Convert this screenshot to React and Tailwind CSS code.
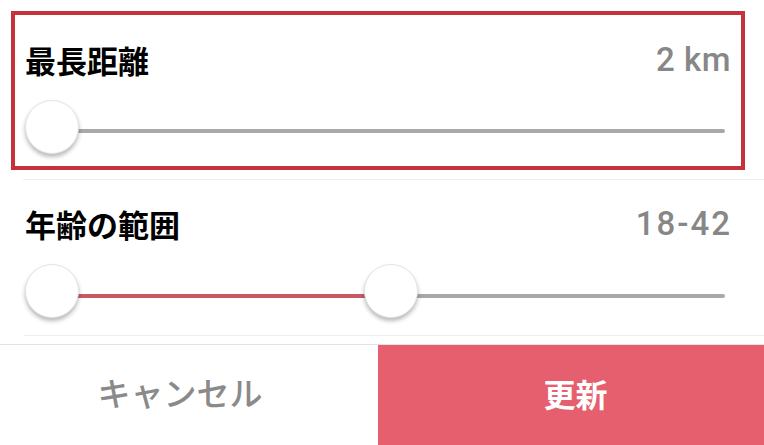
import React from "react";

const cjk = { fontFamily: '"Noto Sans CJK JP", "Noto Sans", sans-serif' };
const num = { fontFamily: 'Roboto, "Liberation Sans", sans-serif' };

function Thumb({ left }) {
  return (
    <div
      className="absolute top-0 w-[54px] h-[54px] rounded-full bg-white border border-[#e4e4e4] shadow-[0_3px_4px_rgba(0,0,0,0.28)]"
      style={{ left }}
    />
  );
}

export default function App() {
  return (
    <div className="w-[764px] h-[445px] bg-white flex flex-col overflow-hidden">
      {/* Section 1 */}
      <div className="pt-[11px] pl-[11px] pr-[19px] pb-[9px]">
        <div className="h-[159px] border-4 border-[#c6323c] flex flex-col pt-[27px]">
          <div className="h-[34px] flex items-center justify-between pl-[10px] pr-[11px]">
            <span className="text-[31px] font-bold text-black leading-none" style={cjk}>
              最長距離
            </span>
            <span className="text-[33px] font-medium text-[#878787] leading-none tracking-[0.5px] -mr-[1px]" style={num}>
              2 km
            </span>
          </div>
          <div className="relative h-[54px] mt-[24px] ml-[10px] mr-[16px]">
            <div className="absolute top-[29px] left-[27px] right-0 h-[4px] bg-[#a8a8a8] rounded-full" />
            <Thumb left={0} />
          </div>
        </div>
      </div>
      <div className="h-px bg-[#eeeeee] ml-[23px]" />

      {/* Section 2 */}
      <div className="pt-[26px] pl-[25px] pr-[34px]">
        <div className="h-[34px] flex items-center justify-between">
          <span className="text-[31px] font-bold text-black leading-none" style={cjk}>
            年齢の範囲
          </span>
          <span className="text-[33px] font-medium text-[#878787] leading-none tracking-[2px] -mr-[2px]" style={num}>
            18-42
          </span>
        </div>
        <div className="relative h-[54px] mt-[24px] mr-[5px]">
          <div className="absolute top-[30px] left-[27px] w-[320px] h-[4px] bg-[#c85a64]" />
          <div className="absolute top-[30px] left-[380px] right-0 h-[4px] bg-[#a8a8a8] rounded-full" />
          <Thumb left={0} />
          <Thumb left={339} />
        </div>
      </div>
      <div className="h-px bg-[#eeeeee] ml-[24px] mt-[17px]" />

      {/* Buttons */}
      <div className="mt-[8px] border-t border-[#e2e2e2] flex h-[101px]">
        <div className="w-[378px] flex items-center justify-center pr-[18px] pb-[5px]">
          <span className="text-[33px] font-medium text-[#8a8a8a] leading-none" style={cjk}>
            キャンセル
          </span>
        </div>
        <div className="flex-1 bg-[#e55f6e] flex items-center justify-center pl-[9px] pb-[5px]">
          <span className="text-[32px] font-bold text-white leading-none" style={cjk}>
            更新
          </span>
        </div>
      </div>
    </div>
  );
}
